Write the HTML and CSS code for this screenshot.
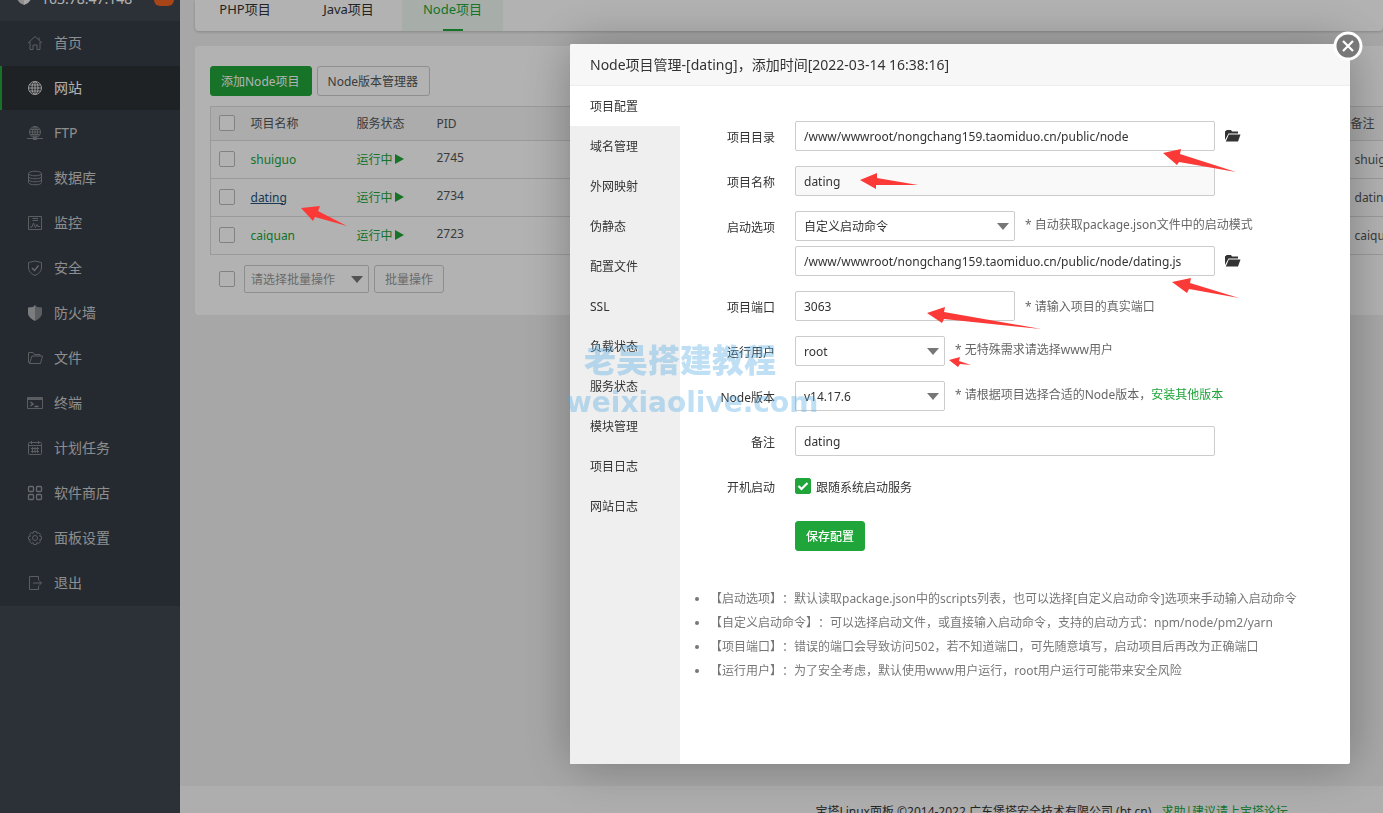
FILE: index.html
```
<!DOCTYPE html>
<html lang="zh-CN">
<head>
<meta charset="utf-8">
<title>Node项目管理</title>
<link rel="stylesheet" href="styles.css">
</head>
<body>
<div class="app">
  <aside class="sidebar">
    <div class="brand">
      <svg class="brand-logo" viewBox="0 0 14 16"><path d="M7 0L14 2V9Q13 14 7 16Z" fill="#eee"/><path d="M7 0L0 2V9Q1 14 7 16Z" fill="#ccc"/></svg>
      <span class="brand-ip">163.78.47.148</span>
      <span class="brand-badge">0</span>
    </div>
    <nav class="menu">
      <a href="#"><svg class="ico" viewBox="0 0 16 16"><path d="M1 8L8 1.5L15 8M3 7V14.5H6V10H10V14.5H13V7M12 5V2.5"/></svg>首页</a>
      <a href="#" class="active"><svg class="ico" viewBox="0 0 16 16"><circle cx="8" cy="8" r="6.5"/><ellipse cx="8" cy="8" rx="3" ry="6.5"/><path d="M8 1.5V14.5M1.5 8H14.5M2.5 5H13.5M2.5 11H13.5"/></svg>网站</a>
      <a href="#"><svg class="ico" viewBox="0 0 16 16"><circle cx="8" cy="7" r="5.5"/><ellipse cx="8" cy="7" rx="2.5" ry="5.5"/><path d="M8 1.5V12.5M2.5 7H13.5M3.5 4.5H12.5M3.5 9.5H12.5M0 13.5H16M6 14.5H10"/></svg>FTP</a>
      <a href="#"><svg class="ico" viewBox="0 0 16 16"><ellipse cx="8" cy="3.5" rx="6.5" ry="2.3"/><path d="M1.5 3.5V12.5C1.5 15.5 14.5 15.5 14.5 12.5V3.5M1.5 6.5C1.5 9.5 14.5 9.5 14.5 6.5M1.5 9.5C1.5 12.5 14.5 12.5 14.5 9.5"/></svg>数据库</a>
      <a href="#"><svg class="ico" viewBox="0 0 16 16"><path d="M1.5 1.5H14.5V14.5H1.5ZM5.500 3.500H11M5.500 5.500H11M3 12H5L6.500 8L8.500 12.500L10 9.500L11 11.500H13"/></svg>监控</a>
      <a href="#"><svg class="ico" viewBox="0 0 16 16"><path d="M8 1L14.500 2.500V8Q14 13 8 15.500Q2 13 1.500 8V2.500Z"/><path class="bold" d="M5 8L7.500 10.500L11.500 5.500"/></svg>安全</a>
      <a href="#"><svg class="ico" viewBox="0 0 16 16"><path class="shield-l" d="M8 0L6 2L1 2.500V9Q2 13 8 16Z"/><path class="shield-r" d="M8 0L10 2L15 2.500V9Q14 13 8 16Z"/></svg>防火墙</a>
      <a href="#"><svg class="ico" viewBox="0 0 16 16"><path d="M2.500 13.500L1.500 12V3Q1.500 2.500 2 2.500H6L7.500 4.500H13V6M2.500 13.500L5 6H15.500L13.500 13.500Z"/></svg>文件</a>
      <a href="#"><svg class="ico" viewBox="0 0 16 16"><path d="M.5 2.500H15.500V13.500H.5ZM.5 3.500H15.500M.5 4.500H15.500"/><path class="bold" d="M3.500 7L6 9L3.500 11M7.500 11.500H11.500"/></svg>终端</a>
      <a href="#"><svg class="ico" viewBox="0 0 16 16"><rect x="1.500" y="2.500" width="13" height="12" rx="1"/><path d="M1.500 5.500H14.500M4.500 1V4M11.500 1V4M4 8.500H12M4 11.500H12M5.500 7V13M8 7V13M10.500 7V13"/></svg>计划任务</a>
      <a href="#"><svg class="ico bold" viewBox="0 0 16 16"><rect x="1.500" y="1.500" width="5" height="5" rx="1"/><rect x="9.500" y="1.500" width="5" height="5" rx="1"/><rect x="1.500" y="9.500" width="5" height="5" rx="1"/><rect x="9.500" y="9.500" width="5" height="5" rx="1"/></svg>软件商店</a>
      <a href="#"><svg class="ico" viewBox="0 0 16 16"><path d="M6.700 1.500H9.300L9.800 3.300L11.700 2.600L13.400 4.300L12.700 6.200L14.500 6.700V9.300L12.700 9.800L13.400 11.700L11.700 13.400L9.800 12.700L9.300 14.500H6.700L6.200 12.700L4.300 13.400L2.600 11.700L3.300 9.800L1.500 9.300V6.700L3.300 6.200L2.600 4.300L4.300 2.600L6.200 3.300Z"/><circle cx="8" cy="8" r="2.500"/></svg>面板设置</a>
      <a href="#"><svg class="ico" viewBox="0 0 16 16"><path d="M11.500 5V1.500H2.500V14.500H11.500V11M6 8H14.500M12 5.500L14.500 8L12 10.500"/></svg>退出</a>
    </nav>
  </aside>
  <div class="content">
    <nav class="tabs">
      <a href="#">PHP项目</a><a href="#">Java项目</a><a href="#" class="on">Node项目</a>
    </nav>
    <main class="panel">
      <div class="toolbar">
        <button class="btn primary">添加Node项目</button>
        <button class="btn">Node版本管理器</button>
      </div>
      <table class="grid">
        <thead><tr><th class="c-check"><input type="checkbox" class="check" aria-label="全选"></th><th class="c-name">项目名称</th><th class="c-state">服务状态</th><th class="c-pid">PID</th><th>备注</th></tr></thead>
        <tbody>
          <tr><td><input type="checkbox" class="check" aria-label="shuiguo"></td><td><a href="#" class="green">shuiguo</a></td><td><a href="#" class="green run">运行中</a></td><td class="pid">2745</td><td class="note">shuiguo</td></tr>
          <tr><td><input type="checkbox" class="check" aria-label="dating"></td><td><a href="#" class="hovered">dating</a></td><td><a href="#" class="green run">运行中</a></td><td class="pid">2734</td><td class="note">dating</td></tr>
          <tr><td><input type="checkbox" class="check" aria-label="caiquan"></td><td><a href="#" class="green">caiquan</a></td><td><a href="#" class="green run">运行中</a></td><td class="pid">2723</td><td class="note">caiquan</td></tr>
        </tbody>
      </table>
      <div class="batch">
        <input type="checkbox" class="check" aria-label="批量选择">
        <select class="select batch-select" aria-label="批量操作"><option>请选择批量操作</option></select>
        <button class="btn muted">批量操作</button>
      </div>
    </main>
    <footer class="footer">宝塔Linux面板 ©2014-2022 广东堡塔安全技术有限公司 (bt.cn)<a href="#">求助|建议请上宝塔论坛</a></footer>
  </div>
</div>

<div class="mask">
  <section class="dialog" role="dialog" aria-labelledby="dlg-title">
    <h1 class="dialog-title" id="dlg-title">Node项目管理-[dating]，添加时间[2022-03-14 16:38:16]</h1>
    <button class="close" aria-label="关闭"><svg viewBox="0 0 30 30"><circle cx="15" cy="15" r="13" fill="#787878" stroke="#fff" stroke-width="3"/><path d="M10 10L20 20M20 10L10 20" stroke="#fff" stroke-width="2.200"/></svg></button>
    <div class="dialog-body">
      <nav class="side-tabs">
        <a href="#" class="on">项目配置</a><a href="#">域名管理</a><a href="#">外网映射</a><a href="#">伪静态</a><a href="#">配置文件</a><a href="#">SSL</a><a href="#">负载状态</a><a href="#">服务状态</a><a href="#">模块管理</a><a href="#">项目日志</a><a href="#">网站日志</a>
      </nav>
      <form class="form">
        <div class="row"><label for="dir">项目目录</label><input id="dir" class="text wide" value="/www/wwwroot/nongchang159.taomiduo.cn/public/node"><svg class="folder" viewBox="0 0 16 12"><path d="M0 10V1.500Q0 1 .5 1H1L1.500 0H6L7 1.500H13V3.500H3.500Z"/><path d="M3.800 4.500H15.500L13 11.500H.8Z"/></svg></div>
        <div class="row"><label for="name">项目名称</label><input id="name" class="text wide" value="dating" readonly></div>
        <div class="row tight"><label for="start">启动选项</label><select id="start" class="select mid"><option>自定义启动命令</option></select><span class="hint">* 自动获取package.json文件中的启动模式</span></div>
        <div class="row"><label for="cmd"></label><input id="cmd" class="text wide" aria-label="启动文件" value="/www/wwwroot/nongchang159.taomiduo.cn/public/node/dating.js"><svg class="folder" viewBox="0 0 16 12"><path d="M0 10V1.500Q0 1 .5 1H1L1.500 0H6L7 1.500H13V3.500H3.500Z"/><path d="M3.800 4.500H15.500L13 11.500H.8Z"/></svg></div>
        <div class="row"><label for="port">项目端口</label><input id="port" class="text mid" value="3063"><span class="hint low">* 请输入项目的真实端口</span></div>
        <div class="row"><label for="user">运行用户</label><select id="user" class="select small"><option>root</option></select><span class="hint">* 无特殊需求请选择www用户</span></div>
        <div class="row"><label for="ver">Node版本</label><select id="ver" class="select small"><option>v14.17.6</option></select><span class="hint">* 请根据项目选择合适的Node版本，<a href="#">安装其他版本</a></span></div>
        <div class="row"><label for="note">备注</label><input id="note" class="text wide" value="dating"></div>
        <div class="row"><span class="label">开机启动</span><input id="boot" type="checkbox" class="check" checked><label for="boot" class="boot">跟随系统启动服务</label></div>
        <div class="row submit"><button type="button" class="btn primary save">保存配置</button></div>
        <ul class="tips">
          <li>【启动选项】：默认读取package.json中的scripts列表，也可以选择[自定义启动命令]选项来手动输入启动命令</li>
          <li>【自定义启动命令】：可以选择启动文件，或直接输入启动命令，支持的启动方式：npm/node/pm2/yarn</li>
          <li>【项目端口】：错误的端口会导致访问502，若不知道端口，可先随意填写，启动项目后再改为正确端口</li>
          <li>【运行用户】：为了安全考虑，默认使用www用户运行，root用户运行可能带来安全风险</li>
        </ul>
      </form>
    </div>
    <div class="watermark"><span class="wm-cn">老吴搭建教程</span><span class="wm-en">weixiaolive.com</span></div>
  </section>
</div>
<svg class="arrows" viewBox="0 0 1383 813">
  <path d="M301 208L320 206L318 211L347 226L315 217L313 221Z"/>
  <path d="M1163 153L1181 149L1180 154L1236 172L1179 162L1177 165Z"/>
  <path d="M860 180L877 173V178L918 185L876 185V189Z"/>
  <path d="M1172 282L1191 278L1190 283L1239 298L1189 289L1187 293Z"/>
  <path d="M927 313L945 307L944 312L1041 329L944 319L942 323Z"/>
  <path d="M949 360L960 357L959 361L971 365L960 364L958 367Z"/>
</svg>
</body>
</html>
```
FILE: styles.css
```
* { box-sizing: border-box; }
body {
  margin: 0;
  height: 100vh;
  overflow: hidden;
  background: #f0f0f0;
  color: #333;
  font: 12px/20px "Noto Sans", "Noto Sans CJK SC", sans-serif;
  text-spacing-trim: space-all;
}
a { color: inherit; text-decoration: none; }
input, select, button { font: inherit; color: inherit; margin: 0; }

.app { display: flex; height: 100vh; }
.sidebar { flex: none; width: 180px; background: #3f4750; color: #ccc; }
.brand { display: flex; align-items: flex-end; height: 21px; overflow: hidden; padding: 0 6px 15px 17px; }
.brand-logo { flex: none; width: 14px; height: 16px; margin-bottom: 1px; }
.brand-ip { flex: 1; margin-left: 10px; font-size: 14px; line-height: 14px; color: #fff; }
.brand-badge { width: 20px; height: 20px; border-radius: 6px; background: #f06423; color: #fff; text-align: center; line-height: 16px; }
.menu { background: #363d46; }
.menu a { display: flex; align-items: center; height: 45px; padding: 0 0 2px 27px; font-size: 14px; }
.menu a.active { height: 44px; margin-bottom: 1px; padding-bottom: 0; background: #2d3136; color: #fff; box-shadow: inset 2px 0 #20a53a; }
.ico { width: 16px; height: 16px; margin-right: 11px; fill: none; stroke: #83878c; stroke-width: 1; }
.ico.bold, .ico .bold { stroke: #94979b; stroke-width: 1.3; }
.active .ico { stroke: #ddd; }
.ico .shield-l { fill: #b0b2b4; stroke: none; }
.ico .shield-r { fill: #85888c; stroke: none; }

.content { flex: 1; min-width: 0; display: flex; flex-direction: column; }
.tabs { flex: none; display: flex; height: 31px; margin-left: 15px; background: #fff; border-radius: 0 0 4px 4px; box-shadow: 0 1px 3px #0003; font-size: 13px; line-height: 18px; }
.tabs a { display: flex; justify-content: center; width: 107px; }
.tabs a:first-child { width: 100px; }
.tabs a.on { width: 101px; background: #f0f9f2; color: #20a53a; flex-direction: column; align-items: center; justify-content: space-between; }
.tabs a.on::after { content: ""; width: 20px; height: 2px; background: #20a53a; }
.panel { margin: 15px 0 0 15px; padding: 20px 0 22px 15px; background: #fff; border-radius: 4px 0 0 4px; }
.toolbar { display: flex; gap: 5px; }
.btn { height: 30px; padding: 2px 10px 0; background: #fff; border: 1px solid #ccc; border-radius: 3px; color: #555; }
.toolbar .btn { padding: 2px 11px 0 10px; }
.btn.primary { background: #20a53a; border-color: #20a53a; color: #fff; }
.btn.muted { height: 28px; color: #999; }
.grid { width: 1182px; margin-top: 10px; border-collapse: collapse; table-layout: fixed; border: 1px solid #ddd; color: #555; }
.grid th { height: 34px; padding: 0; background: #f6f6f6; font-weight: 400; text-align: left; }
.grid td { height: 38px; padding: 0; border-top: 1px solid #ddd; }
.grid .c-check { width: 40px; }
.grid .c-name { width: 106px; }
.grid .c-state { width: 80px; }
.grid .c-pid { width: 914px; }
.grid .pid { padding-bottom: 4px; }
.grid .note { padding-left: 4px; }
.green { color: #20a53a; }
.hovered { color: #23527c; text-decoration: underline; }
.run::after { content: ""; display: inline-block; border: solid transparent; border-width: 5px 0 5px 9px; border-left-color: #20a53a; margin-left: 2px; }
.check { appearance: none; display: block; flex: none; width: 16px; height: 16px; border: 1px solid #bbb; border-radius: 2px; background: #fff; }
.grid .check { margin: 0 0 2px 8px; }
.check:checked { border-color: #20a53a; background: #20a53a url("data:image/svg+xml,%3Csvg xmlns='http://www.w3.org/2000/svg' viewBox='0 0 14 14'%3E%3Cpath d='M2.500 7l3 3 6-6' fill='none' stroke='white' stroke-width='2.200'/%3E%3C/svg%3E"); }
.batch { display: flex; align-items: center; gap: 5px; margin-top: 10px; padding-left: 9px; }
.batch .batch-select { width: 125px; height: 28px; margin-left: 4px; padding-left: 6px; color: #999; }
.select { appearance: none; height: 30px; padding: 2px 24px 0 8px; border: 1px solid #ccc; border-radius: 2px; background: #fff url("data:image/svg+xml,%3Csvg xmlns='http://www.w3.org/2000/svg' width='12' height='7'%3E%3Cpath d='M0 0h12L6 7z' fill='%23777'/%3E%3C/svg%3E") no-repeat right 5px center; }
.footer { flex: none; height: 27px; margin-top: auto; padding: 16px 95px 0 0; overflow: hidden; background: #fafafa; text-align: right; white-space: nowrap; }
.footer a { margin-left: 10px; color: #20a53a; }

.mask { position: fixed; inset: 0; display: flex; justify-content: flex-end; align-items: flex-start; padding: 44px 33px 49px 0; background: #0000004d; }
.dialog { position: relative; display: flex; flex-direction: column; width: 780px; height: 100%; background: #fff; border-radius: 2px; box-shadow: 1px 1px 50px #0000004d; }
.dialog-title { margin: 0; padding: 0 20px; font-size: 14px; font-weight: 400; line-height: 41px; background: #f7f7f7; border-bottom: 1px solid #eee; border-radius: 2px 2px 0 0; }
.close { position: absolute; top: -13px; right: -13px; width: 30px; height: 30px; padding: 0; border: 0; background: none; }
.close svg { display: block; }
.dialog-body { flex: 1; display: flex; min-height: 0; }
.side-tabs { flex: none; width: 110px; background: #efefef; }
.side-tabs a { display: block; height: 40px; padding: 2px 0 0 20px; line-height: 38px; }
.side-tabs a.on { background: #fff; }
.form { flex: 1; min-width: 0; padding-top: 35px; }
.row { display: flex; align-items: center; height: 30px; margin-bottom: 15px; }
.row.tight { margin-bottom: 5px; }
.row > label:first-child, .row .label { width: 95px; margin-right: 20px; padding-top: 3px; text-align: right; }
.text { height: 30px; padding: 0 8px; border: 1px solid #ccc; border-radius: 2px; background: #fff; }
.text[readonly] { background: #f9f9f9; }
.wide { width: 420px; }
.mid { width: 220px; }
.small { width: 150px; }
.folder { width: 16px; height: 12px; margin-left: 10px; fill: #333; }
.hint { margin-left: 10px; padding-bottom: 2px; color: #666; }
.hint.low { padding: 2px 0 0; }
.hint a { color: #20a53a; }
.row .boot { margin-left: 5px; padding-top: 4px; }
.submit { margin: 20px 0 0 115px; }
.tips { margin: 36px 0 0; padding-left: 30px; line-height: 24px; color: #777; }
.btn.save { font-weight: 500; }
.watermark { position: absolute; top: 294px; left: -4px; display: flex; flex-direction: column; color: #4da6e45c; pointer-events: none; white-space: nowrap; }
.wm-cn { margin-left: 18px; font: 900 32px/40px "Noto Sans CJK SC", sans-serif; }
.wm-en { font: 700 28px/50px "DejaVu Sans", sans-serif; }
.arrows { position: fixed; top: 0; left: 0; width: 1383px; height: 813px; fill: #fb3a37; pointer-events: none; }
```
